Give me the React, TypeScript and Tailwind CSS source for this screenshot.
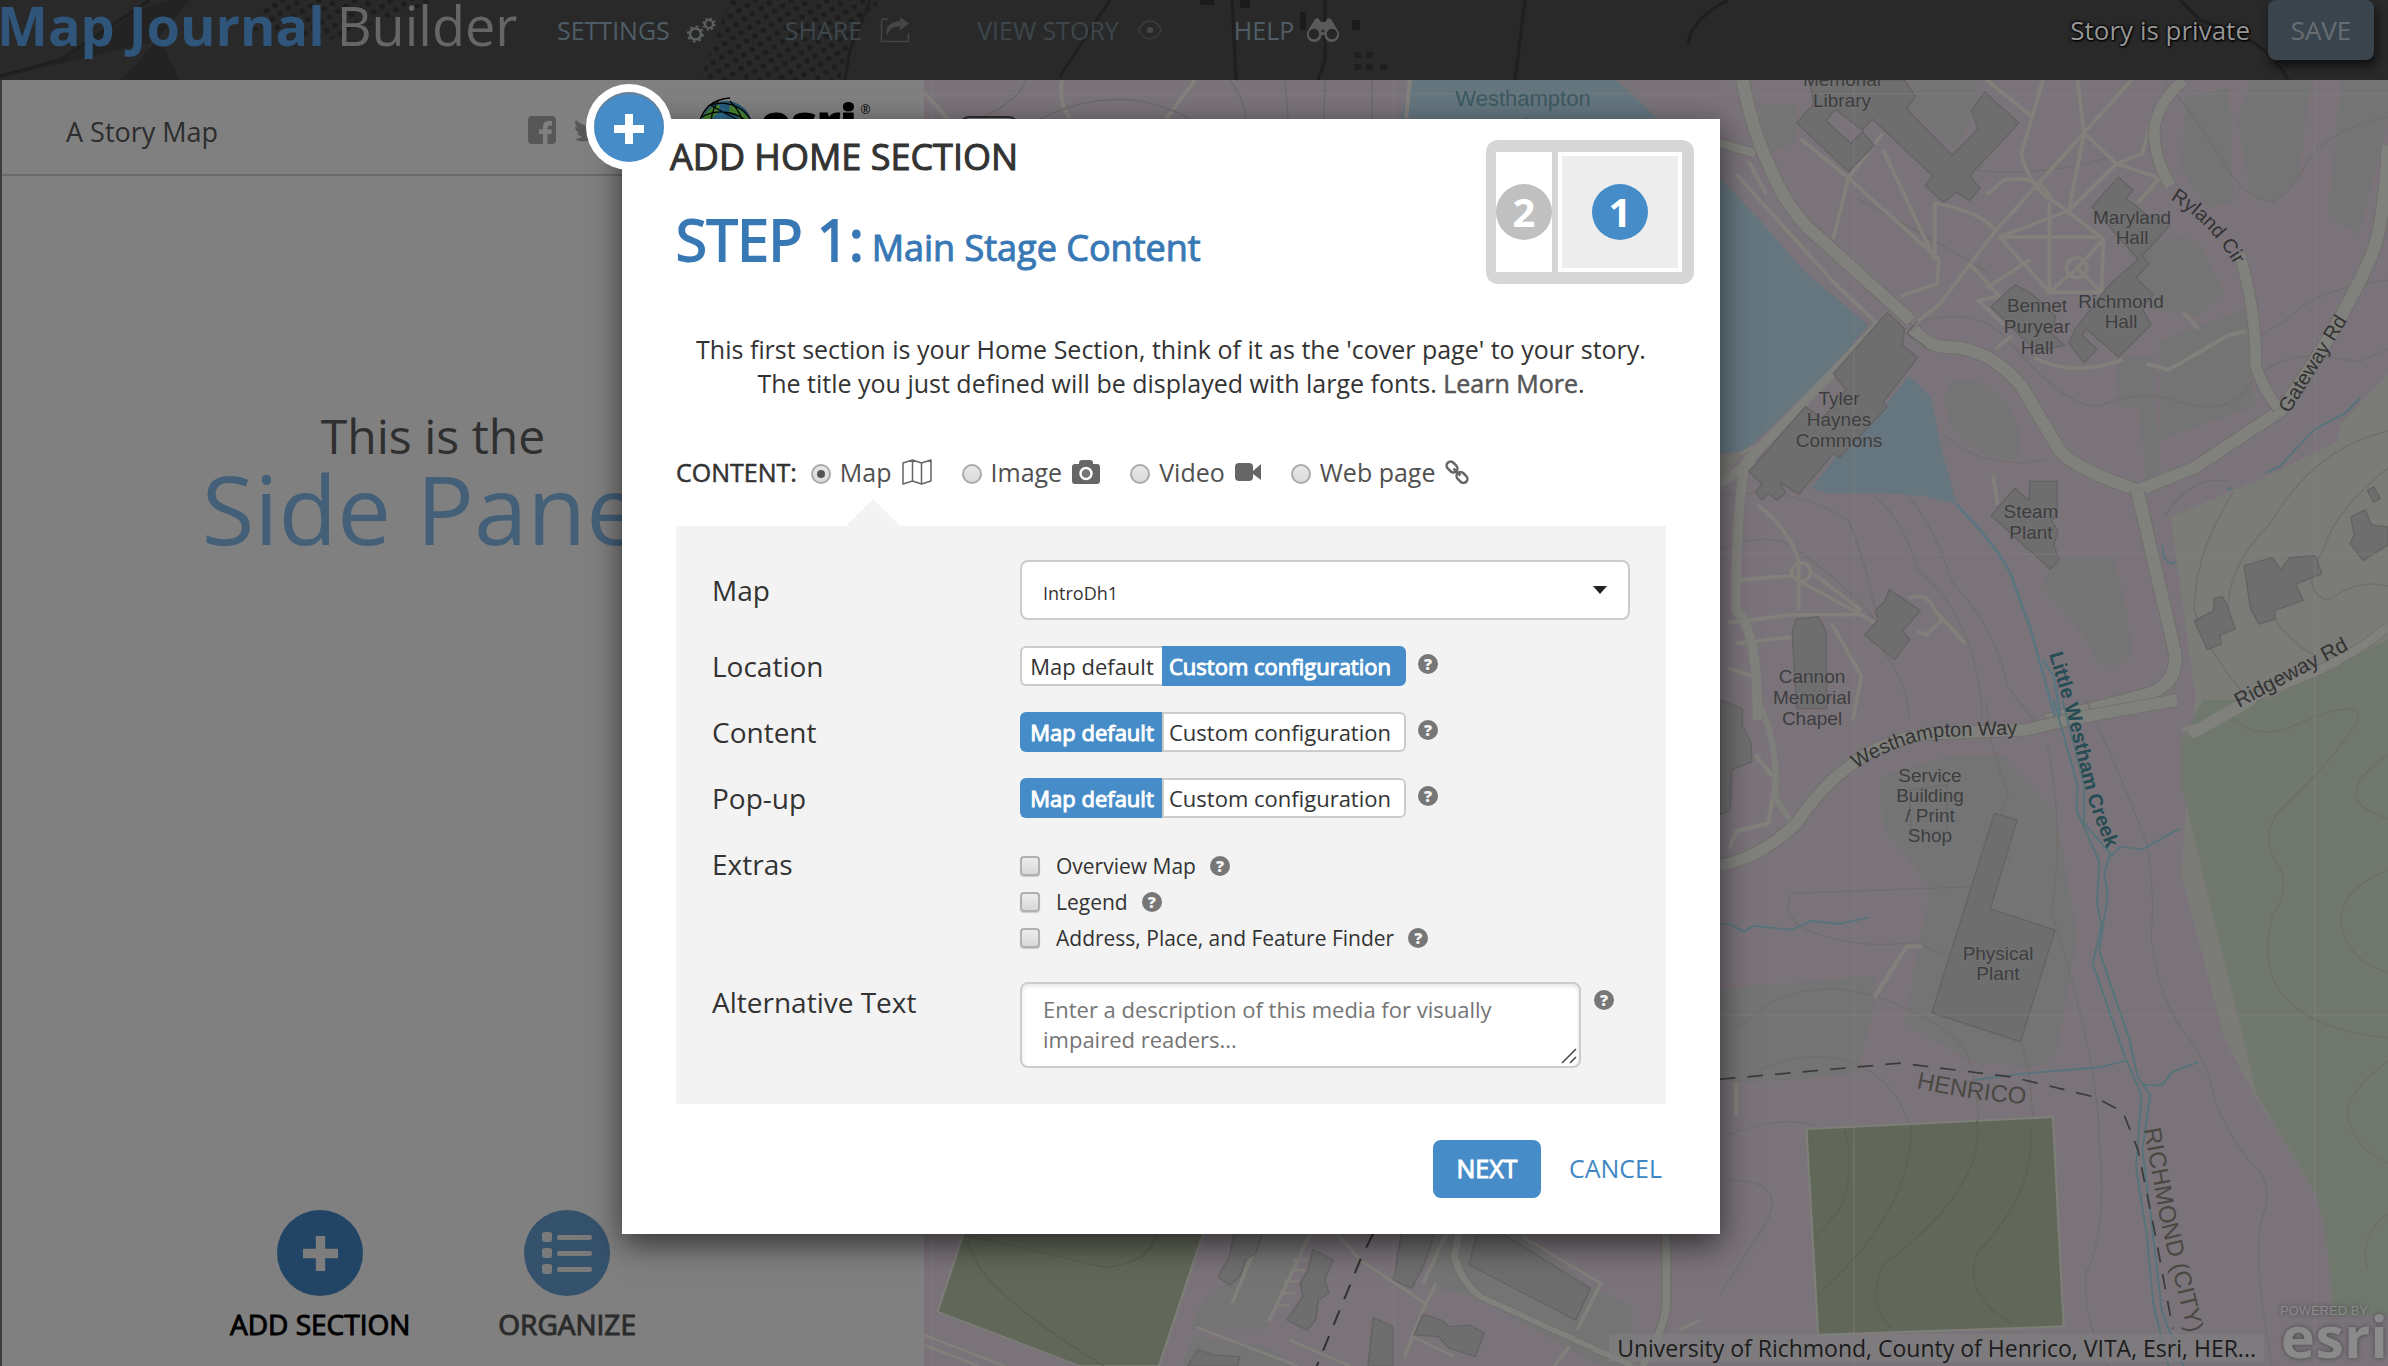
import React from "react";

const FAKE_BOLD = "[-webkit-text-stroke:1px_currentColor]";

function GearsIcon() {
  return (
    <svg viewBox="0 0 30 26" className="h-[26px] w-[30px]" fill="none" stroke="#5c6062">
      <circle cx="9.500" cy="17" r="5.500" strokeWidth="2.500" />
      <circle cx="9.500" cy="17" r="7.600" strokeWidth="1.800" strokeDasharray="2.800 3.170" />
      <circle cx="23" cy="7" r="4" strokeWidth="2.200" />
      <circle cx="23" cy="7" r="5.800" strokeWidth="1.600" strokeDasharray="2.200 2.350" />
    </svg>
  );
}

function ShareIcon() {
  return (
    <svg viewBox="0 0 30 28" className="h-7 w-[30px]">
      <path d="M8 3H3.500Q1.500 3 1.500 5V25.500H28.500V17" fill="none" stroke="#454545" strokeWidth="1.500" />
      <path d="M20 1L29 7.500L20 14.500V10.500C12 10 9 14 7 20C5 12 9 5.500 20 5Z" fill="#454545" />
    </svg>
  );
}

function EyeIcon() {
  return (
    <svg viewBox="0 0 26 22" className="h-[22px] w-[26px]">
      <path d="M1.500 11C5 4 9 2 13 2S21 4 24.500 11C21 18 17 20 13 20S5 18 1.500 11Z" fill="none" stroke="#3c3c3c" strokeWidth="1.500" />
      <circle cx="13" cy="11" r="3" fill="#484848" />
    </svg>
  );
}

function BinocularsIcon() {
  return (
    <svg viewBox="0 0 34 24" className="h-6 w-[34px]">
      <path d="M9 1L12 0L15 4H19L22 0L25 1L31 11C36 18 31 24 26 24C21 24 19 21 18.500 17H15.500C15 21 13 24 8 24C3 24-2 18 3 11Z" fill="#5a5a5a" />
      <circle cx="8" cy="16" r="5.200" fill="#262626" />
      <circle cx="26" cy="16" r="5.200" fill="#262626" />
      <circle cx="17" cy="13" r="1.500" fill="#262626" />
    </svg>
  );
}

function FacebookIcon() {
  return (
    <svg viewBox="0 0 28 28" className="size-7">
      <rect width="28" height="28" rx="4" fill="#575757" />
      <path d="M15 28V18H11V13.500H15V11Q15 5 21 5H24V9.500H21.500Q19.500 9.500 19.500 11.500V13.500H24L23.300 18H19.500V28Z" fill="#808080" />
    </svg>
  );
}

function TwitterIcon() {
  return (
    <svg viewBox="0 0 24 24" className="size-7" fill="#575757">
      <path d="M23.950 4.570a10 10 0 01-2.820.77 4.960 4.960 0 002.160-2.720c-.95.55-2 .95-3.130 1.180a4.920 4.920 0 00-8.380 4.480C7.690 8.090 4.070 6.130 1.640 3.160a4.820 4.820 0 00-.67 2.480c0 1.710.87 3.210 2.190 4.100a4.900 4.900 0 01-2.230-.62v.06a4.920 4.920 0 003.950 4.830 5 5 0 01-2.210.08 4.940 4.940 0 004.600 3.420A9.870 9.870 0 010 19.540a13.990 13.990 0 007.560 2.210c9.050 0 14-7.500 14-13.980 0-.21 0-.42-.02-.63a9.940 9.940 0 002.410-2.570z" />
    </svg>
  );
}

function EsriGlobe() {
  return (
    <svg viewBox="0 0 60 60" className="size-[60px]">
      <defs>
        <radialGradient id="sea" cx="0.400" cy="0.300" r="0.700">
          <stop offset="0" stopColor="#2f6f8f" />
          <stop offset="1" stopColor="#0f3350" />
        </radialGradient>
      </defs>
      <circle cx="30" cy="30" r="26" fill="url(#sea)" />
      <path d="M8 18Q16 8 24 8L23 14L18 20L12 24L4 28ZM34 8Q48 12 54 24L44 22L40 17L33 15Z" fill="#47822f" />
      <path d="M3 26C8 8 20 2 34 1M12 9C26 3 46 6 57 26M6 20C24 10 46 16 56 30M22 4C15 14 13 30 16 40M34 4C44 14 48 24 48 34M14 8L40 22" fill="none" stroke="#000" strokeWidth="1.300" />
    </svg>
  );
}

function MapIcon() {
  return (
    <svg viewBox="0 0 30 26" className="h-[26px] w-[30px]" fill="none" stroke="#666" strokeWidth="1.500" strokeLinejoin="round">
      <path d="M1 4L10.500 1L19.500 4L29 1V22L19.500 25L10.500 22L1 25ZM10.500 1V22M19.500 4V25" />
    </svg>
  );
}

function CameraIcon() {
  return (
    <svg viewBox="0 0 28 24" className="h-6 w-7">
      <path d="M3 4H7V3Q7 0 10 0H18Q21 0 21 3V4H25Q28 4 28 7V21Q28 24 25 24H3Q0 24 0 21V7Q0 4 3 4Z" fill="#666" />
      <circle cx="14" cy="13.500" r="5.500" fill="none" stroke="#fff" strokeWidth="2.500" />
      <circle cx="14" cy="13.500" r="3.500" fill="#777" />
    </svg>
  );
}

function VideoIcon() {
  return (
    <svg viewBox="0 0 26 18" className="h-[18px] w-[26px]" fill="#666">
      <rect width="18" height="18" rx="4" />
      <path d="M18 8L26 1V17L18 11Z" />
    </svg>
  );
}

function LinkIcon() {
  return (
    <svg viewBox="0 0 24 24" className="size-6" fill="none" stroke="#666" strokeWidth="2.500">
      <rect x="1" y="3" width="12" height="8" rx="4" transform="rotate(45 7 7)" />
      <rect x="11" y="13.500" width="12" height="8" rx="4" transform="rotate(45 17 17.500)" />
      <path d="M8.500 8.500L15.500 15.500" />
    </svg>
  );
}

function PlusIcon({ className }: { className: string }) {
  return (
    <svg viewBox="0 0 30 30" className={className} fill="currentColor">
      <path d="M11 0H19V11H30V19H19V30H11V19H0V11H11Z" />
    </svg>
  );
}

function ListIcon() {
  return (
    <svg viewBox="0 0 50 42" className="h-[42px] w-[50px]" fill="#7a7a7a">
      <rect x="0" y="0" width="10" height="10" rx="3" />
      <rect x="0" y="16" width="10" height="10" rx="3" />
      <rect x="0" y="32" width="10" height="10" rx="3" />
      <rect x="15" y="3" width="35" height="5" rx="2" />
      <rect x="15" y="19" width="35" height="5" rx="2" />
      <rect x="15" y="35" width="35" height="5" rx="2" />
    </svg>
  );
}

function Help() {
  return (
    <button
      type="button"
      aria-label="Help"
      className="flex size-5 shrink-0 items-center justify-center rounded-full bg-[#777] text-[16px] leading-5 font-extrabold text-[#f3f3f3]"
    >
      ?
    </button>
  );
}

function HeaderTexture() {
  return (
    <svg className="absolute inset-0 h-full w-full" viewBox="0 0 2388 80" preserveAspectRatio="xMinYMin slice">
      <defs>
        <pattern id="dots" width="14" height="14" patternUnits="userSpaceOnUse" patternTransform="rotate(12)">
          <circle cx="4" cy="4" r="2.800" fill="#1d1d1d" />
          <circle cx="11" cy="11" r="2.800" fill="#1d1d1d" />
        </pattern>
      </defs>
      <rect width="2388" height="80" fill="#292929" />
      <path d="M730 0H880L850 40L840 80H700Z" fill="url(#dots)" />
      <path d="M270 0H440L330 40L250 30Z" fill="url(#dots)" />
      <path d="M0 78L60 62L140 10L170 0H190L140 60L120 80H180L160 40" fill="#232323" />
      <g fill="none" stroke="#1f1f1f" strokeWidth="3">
        <path d="M0 76L60 60L150 0M870 0L850 50L845 80M1110 0L1060 76M1232 0L1236 80M1325 0V60L1318 80M1525 0L1515 80M1728 0Q1690 20 1688 45M2180 0L2200 20Q2270 40 2288 80" />
      </g>
      <g fill="#1b1b1b">
        <path d="M1200 0H1214V5H1200ZM1240 0H1250V8H1240ZM1300 12H1306V30H1300ZM1352 20H1360V30H1352Z" />
        <path fill="#1f1f1f" d="M1354 52H1361V58H1354ZM1366 52H1373V58H1366ZM1354 64H1361V70H1354ZM1366 64H1373V70H1366ZM1380 64H1387V70H1380Z" />
      </g>
    </svg>
  );
}

const labels: { x: number; y: number; lines: string[]; step: number }[] = [
  { x: 1842, y: 86, lines: ["Memorial", "Library"], step: 21 },
  { x: 2132, y: 224, lines: ["Maryland", "Hall"], step: 20 },
  { x: 2037, y: 312, lines: ["Bennet", "Puryear", "Hall"], step: 21 },
  { x: 2121, y: 308, lines: ["Richmond", "Hall"], step: 20 },
  { x: 1839, y: 405, lines: ["Tyler", "Haynes", "Commons"], step: 21 },
  { x: 2031, y: 518, lines: ["Steam", "Plant"], step: 21 },
  { x: 1812, y: 683, lines: ["Cannon", "Memorial", "Chapel"], step: 21 },
  { x: 1930, y: 782, lines: ["Service", "Building", "/ Print", "Shop"], step: 20 },
  { x: 1998, y: 960, lines: ["Physical", "Plant"], step: 20 },
];

function Road({ d, width }: { d: string; width: number }) {
  return (
    <>
      <path d={d} fill="none" stroke="#6f6e6b" strokeWidth={width + 3} strokeLinejoin="round" />
      <path d={d} fill="none" stroke="#80807d" strokeWidth={width - 1} strokeLinejoin="round" />
    </>
  );
}

function CampusMap() {
  return (
    <svg
      className="absolute inset-0 h-full w-full"
      viewBox="924 80 1464 1286"
      preserveAspectRatio="xMinYMin slice"
      role="img"
      aria-label="Campus map"
      fontFamily='"Liberation Sans", Arial, sans-serif'
    >
      <defs>
        <path id="ryland" d="M2170 199Q2215 226 2238 272" />
        <path id="westway" d="M1856 769Q1900 742 1940 737L2030 734" />
        <path id="creek" d="M2049 654L2068 718L2088 800L2120 885" />
        <path id="henrico" d="M1916 1088Q1980 1102 2040 1105" />
        <path id="richmond" d="M2144 1129L2160 1220L2196 1366" />
      </defs>
      <rect x="924" y="80" width="1464" height="1286" fill="#7a737a" />
      <path d="M1412 80H1616L1658 119L1720 178L1766 227L1805 272L1868 325L1835 366L1745 451L1720 453L1600 400L1400 119Z" fill="#65767f" />
      <g fill="none" stroke="#82817c" strokeWidth="4">
        <path d="M1062 80Q1058 100 1070 119M1195 80L1166 119M1410 80L1406 119M924 92L948 119" />
      </g>
      <g fill="none" stroke="#6f6a6a" strokeWidth="1.500">
        <path d="M980 119Q1020 100 1026 80M1040 119Q1120 80 1190 119M1230 80Q1245 100 1246 119M1285 80L1288 119M1325 80L1324 119M1372 80V119" />
      </g>

      {/* north-east quadrant */}
      <g transform="matrix(.4324 0 0 .4082 1710 80)" strokeLinejoin="round">
        <path d="M460 725L510 775L535 900L570 1040L500 1020L400 1012H270L235 1000L300 910L410 790Z" fill="#65767f" />
        <path d="M1065 1070L1290 970L1450 885L1460 840L1568 720V1568H1130Z" fill="#7b7b78" />
        <path d="M1568 1370L1240 1545L1200 1568H1568Z" fill="#70786d" />
        <g fill="#747474">
          <path d="M1100 40L1200 20L1210 300L1150 310L1090 220ZM1250 0H1390L1360 240L1300 300L1250 280L1220 100ZM1460 0H1568V100L1500 380L1430 330Z" />
          <path d="M1020 400Q1130 360 1150 440L1190 520L1130 580L1020 560L985 480ZM940 680H1030V780L1040 960L1010 980L990 800H945ZM560 740Q640 720 690 800Q740 900 700 930Q640 940 560 850Q530 780 560 740ZM800 1170H930Q960 1250 975 1400Q950 1450 900 1430Q860 1340 765 1240Z" />
          <path d="M1040 640L1240 560L1280 640L1250 700L1260 800L1040 880Z" />
          <path d="M470 0H620L600 100L570 170L450 60ZM110 60H200V150L140 180Z" />
        </g>
        <g fill="none" stroke="#726d6d" strokeWidth="3">
          <path d="M1050 0Q1110 70 1180 190Q1230 290 1300 300Q1350 270 1370 220Q1420 120 1568 90M600 220Q760 240 920 190M460 600Q620 540 700 650Q820 800 900 800Q980 760 1060 780Q1180 830 1240 760Q1300 660 1440 680L1500 690L1568 660M1568 490Q1400 510 1330 590Q1280 620 1260 640M340 290Q500 380 640 470M23 1020Q200 990 320 1080Q370 1200 400 1400Q460 1480 460 1568M380 1020Q450 1080 480 1200Q620 1320 630 1568M460 1020Q520 1100 560 1230Q660 1340 690 1490L750 1568M23 1150Q140 1100 200 1150Q330 1250 380 1320M540 870Q640 960 780 930M1210 1010Q1120 1160 1120 1300Q1150 1400 1240 1510M1568 860Q1400 900 1300 1080Q1190 1200 1200 1300M1568 950Q1440 1060 1420 1150Q1360 1250 1430 1275Q1500 1220 1568 1240M1300 1310Q1340 1380 1400 1410M1050 1070Q1120 960 1200 985" />
        </g>
        <g fill="none" stroke="#81807b" strokeWidth="9">
          <path d="M640 0L745 90M770 0L720 180Q740 270 800 300L910 390L905 520H785V300M850 0L865 130L830 320L670 385H910M865 130L940 205L1040 240L990 300M975 0L865 130M1020 100L1000 180L940 205L830 320M865 130L660 370L530 550L470 600M400 130L320 240L210 145M320 240L530 440L525 500L440 530M320 240L285 390M400 170L520 440M520 300V440M520 300Q640 330 660 370M640 280L680 245Q760 230 790 290M670 385L785 520M600 450L670 530L620 540L680 600M740 440L640 510M850 460L910 390M850 460L785 520M850 460L905 520M700 625L660 660M750 680Q840 730 955 685M1010 695L1060 710L1200 625L1240 615M1095 570L1130 610M655 970L665 1040" />
          <circle cx="848" cy="460" r="24" />
        </g>
        <g fill="none" stroke="#81807b" strokeWidth="9">
          <path d="M60 230L290 500L390 600M90 200L130 280M110 1040Q190 1110 205 1180V1300M60 1225L185 1215L350 1310L380 1330M240 1210L350 1300M40 1330L190 1310H350M60 1380L190 1365M40 1440L100 1460M280 1330L350 1460L330 1568M460 1270Q500 1250 520 1300L590 1380M480 1350L500 1360L540 1320M100 900L23 940" />
          <circle cx="211" cy="1205" r="22" />
        </g>
        <path d="M390 600L80 940Q60 1060 60 1300Q110 1340 110 1568M23 990L100 930" fill="none" stroke="#80807d" strokeWidth="22" />
        <path d="M23 920L75 910L23 985Z" fill="#7a7a77" />
        <Road d="M23 155L105 180" width={22} />
        <Road d="M75 0Q100 130 135 205Q170 300 225 360L465 590" width={30} />
        <Road d="M470 610Q500 655 560 655Q650 660 720 750L810 910Q850 955 990 1005L1120 950L1320 810Q1450 620 1530 430Q1560 350 1568 160" width={30} />
        <Road d="M988 1005L1075 1400Q1085 1480 1010 1505L780 1568" width={30} />
        <Road d="M1095 0Q1030 60 1027 130Q1030 200 1065 260M1225 425Q1265 580 1262 700Q1280 760 1315 805" width={26} />
        <Road d="M1568 1340Q1500 1400 1400 1450L1130 1568" width={22} />
        <g fill="#6e6e6e" stroke="#636363" strokeWidth="3">
          <path d="M230 0H450L475 40L455 70L560 185L620 120L605 75L635 30L715 105L600 235L625 265L600 295L570 275L540 300L498 260L515 235L375 95L350 125L380 160L320 225L200 105L240 60Z" />
          <path d="M945 238L978 270L962 290L1010 330L1065 355L1000 430L1015 450L985 485L1025 525L1000 560L1020 600L945 678L870 610L860 625L895 660L865 692L830 645L845 610L925 500L990 440L883 310Z" />
          <path d="M705 502L740 520L800 580L790 620L820 650L780 660L740 650L650 555Z" />
          <path d="M410 570L450 610L445 650L480 680L400 790L410 800L300 925L285 915L205 1015L160 985L175 1010L155 1030L135 1012L120 1028L105 1010L120 990L90 960L220 800L260 830L315 760L285 720Z" />
          <path d="M740 983H803V1060L790 1080L805 1105L795 1140L808 1175L787 1198L650 1067L705 1000L738 1030Z" />
          <path d="M200 1320L250 1315L268 1350L270 1540H200L190 1350Z" />
          <path d="M415 1248L487 1300L445 1350L462 1370L427 1420L358 1360L390 1320L382 1300L402 1280Z" />
          <path d="M1235 1190L1300 1170L1320 1200L1340 1170L1400 1165L1415 1210L1355 1235L1372 1275L1305 1300L1308 1320L1270 1333L1250 1295Z" />
          <path d="M1120 1325L1165 1300L1165 1270L1185 1265L1197 1290L1215 1345L1180 1360L1182 1382L1150 1395Z" />
          <path d="M1482 1070L1515 1053L1530 1090L1568 1095V1140L1510 1177L1480 1135L1490 1115ZM1520 1005L1535 997L1550 1025L1535 1035Z" />
        </g>
        <path d="M290 72L355 125L325 155L268 100Z" fill="#7a737a" stroke="#636363" strokeWidth="3" />
        <path d="M480 590L455 620L500 655" fill="none" stroke="#636363" strokeWidth="3" />
        <path d="M570 1040Q690 1170 705 1240L740 1340L800 1568M770 1420L795 1460L812 1568" fill="none" stroke="#5a7680" strokeWidth="6" />
        <path d="M1285 963L1320 945L1345 915L1400 855L1470 815L1503 780M1195 1005L1208 998M1045 1140L1050 1170L1065 1185L1078 1180" fill="none" stroke="#52747a" strokeWidth="4" />
      </g>

      {/* south-east quadrant */}
      <g transform="matrix(.4324 0 0 .4247 1710 700)" strokeLinejoin="round">
        <path d="M1120 0H1568V1400H1440Q1430 1240 1400 1160L1265 940L1190 800L1090 410Z" fill="#7b7b78" />
        <path d="M1140 0H1568V1450H1440Q1430 1240 1400 1160L1265 930L1090 200V100Z" fill="#70786d" />
        <g fill="#747474">
          <path d="M395 180L560 130H680L800 270L850 560L800 830Q760 880 700 860L600 850L450 760L510 440L400 300Z" />
          <path d="M23 680L380 650V720L340 880L100 900H23Z" />
        </g>
        <g fill="none" stroke="#726d6d" strokeWidth="3">
          <path d="M640 0Q640 100 690 220Q640 340 700 380M780 100Q820 300 790 500Q900 850 900 1040Q920 1250 870 1350Q860 1450 920 1568M870 0Q960 200 1010 340Q1030 450 1020 560Q1040 720 1110 800Q1150 850 1170 950Q1210 1050 1270 1110Q1300 1150 1280 1210Q1250 1300 1300 1568M600 440L190 455Q160 500 220 540Q340 590 480 570L560 610M50 770Q80 770 130 720Q260 640 440 720Q580 780 600 850Q640 980 600 1150L400 1320Q350 1400 420 1470M100 880Q250 800 380 880Q480 960 460 1080Q420 1200 240 1400M23 1030Q280 930 320 1100Q320 1200 250 1300M40 1130Q180 1130 130 1230L23 1400M720 800Q760 950 740 1130Q600 1280 600 1350Q620 1450 740 1460" />
          <path stroke="#696f65" d="M1200 30Q1240 90 1330 70Q1500 -10 1500 40Q1480 100 1310 270Q1270 330 1320 400Q1340 450 1300 510Q1270 640 1330 700Q1400 780 1568 795M1568 130Q1450 210 1520 260L1568 280M1568 400Q1450 450 1460 530Q1480 620 1568 640M1568 850Q1450 940 1480 1000Q1500 1060 1568 1090M1568 1210Q1500 1260 1520 1340" />
        </g>
        <path d="M380 700L455 580H490M60 900V980M105 130L145 180M150 200L135 290L60 310L45 350M1090 70L1130 60" fill="none" stroke="#81807b" strokeWidth="10" />
        <path d="M110 0Q160 100 150 230L190 290" fill="none" stroke="#7e7e7b" strokeWidth="14" />
        <Road d="M1080 0L860 40L730 70L500 80Q400 95 330 150Q260 200 200 290Q120 370 23 390" width={28} />
        <path d="M1250 0L1120 75" fill="none" stroke="#80807d" strokeWidth="28" strokeLinecap="round" />
        <g fill="#6e6e6e" stroke="#636363" strokeWidth="3">
          <path d="M658 267L710 283L648 492L798 542L718 805L513 736Z" />
          <path d="M462 212L548 200V308H465Z" fill="#747474" stroke="#6b6b6b" />
          <path d="M23 0L75 20V60L95 100L97 145L50 165L47 260L23 270Z" />
        </g>
        <path d="M223 1010L793 982L818 1475L250 1495Z" fill="#626859" stroke="#7e7f78" strokeWidth="5" />
        <g fill="none" stroke="#5b6052" strokeWidth="3">
          <path d="M310 1010Q340 1100 300 1200L240 1270M465 1000Q470 1200 250 1400M617 990Q640 1150 400 1330Q360 1420 420 1480M740 1000Q760 1150 620 1300Q580 1400 700 1470" />
        </g>
        <g fill="none" stroke="#52747a" strokeWidth="4">
          <path d="M795 0L850 200L848 260L900 380L895 480L905 530L885 620L960 840L998 930L985 1100L1010 1260L1025 1420L1060 1568M815 0L865 200V290L925 360L912 410L920 460L900 590L970 800L990 890L1018 930L1000 1060L1020 1220L1045 1440L1095 1568M925 370L950 345L1000 352L1085 303M610 895L720 880L900 865L960 850M1000 905L1045 908L1070 875L1128 853M23 525L50 530L78 545L100 532L190 541L235 520L300 527L368 512" />
        </g>
        <path d="M23 893L440 855L700 888L890 935L955 970L990 1060L1030 1260L1070 1480" fill="none" stroke="#3b3b3b" strokeWidth="4" strokeDasharray="36 28" />
      </g>

      {/* strip below the dialog */}
      <g transform="matrix(.523 0 0 .3333 900 1220)" strokeLinejoin="round">
        <path d="M640 0H800L700 330L560 330Q560 230 640 180ZM1020 0H1150L1320 200L1400 260L1400 438H1340L1100 230L1010 200ZM560 350L700 380L760 438H540Z" fill="#747474" />
        <path d="M130 0H588L495 438H345L72 275Z" fill="#626859" stroke="#7e7f78" strokeWidth="4" />
        <path d="M130 50Q150 50 390 142Q480 130 490 40M130 60Q140 200 390 438" fill="none" stroke="#5a5e50" strokeWidth="3" />
        <g fill="none" stroke="#81807b" strokeWidth="7">
          <path d="M46 345L200 438M46 375L150 438M690 40L635 250M785 40L705 305M835 40L880 120L1005 250L965 410M1045 40L1000 190M1025 190L1005 250M565 320L760 438M745 360L860 438M1190 50L1340 190L1295 330M980 350L1060 410M1490 330L1530 300M1280 380L1250 438M750 120H780M745 150H775M735 185H765M728 220H755M720 255H745" />
        </g>
        <Road d="M1075 0L1060 110Q1075 190 1110 230L1400 438" width={16} />
        <Road d="M1465 0V260Q1460 330 1420 438" width={16} />
        <g fill="#6e6e6e" stroke="#636363" strokeWidth="3">
          <path d="M640 30H695L680 100L660 120L650 170L630 195L608 170L630 110Z" />
          <path d="M790 88L828 120L812 180L820 220L800 240L795 300L778 330L740 300L770 230L765 190L780 150Z" />
          <path d="M960 30H1023L1010 100L1000 140L978 205L943 180L950 120Z" />
          <path d="M1110 0L1320 205L1292 300L1088 135Z" />
          <path d="M1000 283L1035 300L1050 320L1090 315L1117 340L1100 410L1050 385L1030 350L983 345Z" />
          <path d="M905 293L943 320V438H895ZM570 388L600 405L650 410L645 438H550Z" />
        </g>
        <path d="M905 40L880 120L797 438" fill="none" stroke="#303030" strokeWidth="4" strokeDasharray="45 35" />
      </g>

      <g stroke="#87848a" strokeOpacity=".5" strokeWidth="1">
        <path d="M924 94H2388M924 554H2388M924 1015H2388M932 80V1366M1394 80V1366M1854 80V1366M2315 80V1366" />
      </g>

      <path d="M962 140V124Q962 117 970 117H1008Q1016 117 1016 124V140" fill="#808080" stroke="#2c2c2c" strokeWidth="2" />

      <g fill="#3d3d3f" fontSize="19" textAnchor="middle" stroke="#7a7a7a" strokeWidth="2" strokeOpacity=".35" paintOrder="stroke">
        {labels.map((l) => (
          <text key={l.lines.join(" ")}>
            {l.lines.map((t, i) => (
              <tspan key={t} x={l.x} y={l.y + i * l.step}>
                {t}
              </tspan>
            ))}
          </text>
        ))}
      </g>
      <g fill="#3c5a60" fontSize="22" textAnchor="middle">
        <text x="1523" y="106">Westhampton</text>
        <text x="1523" y="134">Lake</text>
      </g>
      <g fill="#333" fontSize="20">
        <text><textPath href="#ryland">Ryland Cir</textPath></text>
        <text transform="translate(2289 414) rotate(-58)">Gateway Rd</text>
        <text transform="translate(2239 708) rotate(-28)" fontSize="21">Ridgeway Rd</text>
        <text fontSize="20"><textPath href="#westway">Westhampton Way</textPath></text>
        <text fill="#264c54" fontWeight="bold" fontSize="20"><textPath href="#creek">Little Westham Creek</textPath></text>
      </g>
      <g fill="#4a4843" fontSize="24">
        <text><textPath href="#henrico">HENRICO</textPath></text>
        <text><textPath href="#richmond">RICHMOND (CITY)</textPath></text>
      </g>
    </svg>
  );
}

function Header() {
  const item = "flex items-center";
  return (
    <header className="relative h-20 shrink-0 overflow-hidden bg-[#292929]">
      <HeaderTexture />
      <div className="relative flex h-[60px] items-center text-[25px] leading-[60px]">
        <h1 className="-ml-[3px] flex w-[560px] shrink-0 gap-3 self-start text-[54px] leading-[50px] whitespace-nowrap">
          <span className="font-bold text-[#2f567a]">Map Journal</span>
          <span className="text-[#666]">Builder</span>
        </h1>
        <nav className="flex grow items-center text-[#4e5d66]">
          <button type="button" className={item + " gap-4"}>SETTINGS <GearsIcon /></button>
          <button type="button" className={item + " ml-[69px] gap-[18px] text-[#3d464b]"}>SHARE <ShareIcon /></button>
          <button type="button" className={item + " ml-[67px] gap-[18px] text-[#3d464b]"}>VIEW STORY <EyeIcon /></button>
          <button type="button" className={item + " ml-[71px] gap-3"}>HELP <BinocularsIcon /></button>
        </nav>
        <p className="mr-[18px] text-[26px] text-[#969696] [text-shadow:0_0_3px_#000,0_0_3px_#000,1px_1px_2px_#000]">Story is private</p>
        <button
          type="button"
          className="mr-[14px] h-[60px] w-[106px] rounded-lg bg-[#3a444c] text-[26px] text-[#666e74] shadow-[2px_6px_10px_#111]"
        >
          SAVE
        </button>
      </div>
    </header>
  );
}

function SidePanel() {
  return (
    <aside className="flex w-[924px] shrink-0 flex-col border-l-2 border-[#3c3c3c] bg-[#808080]">
      <div className="flex h-24 shrink-0 items-center border-b-2 border-[#6a6a6a] pl-16">
        <p className="w-[462px] pt-[10px] text-[27px] text-[#2d2d2d]">A Story Map</p>
        <a href="#facebook" aria-label="Facebook" className="mt-[6px]"><FacebookIcon /></a>
        <a href="#twitter" aria-label="Twitter" className="mt-[6px] ml-[18px]"><TwitterIcon /></a>
        <a href="#esri" className="relative ml-[94px] flex items-start gap-1 text-black">
          <EsriGlobe />
          <span className={"text-[50px] leading-[50px] font-extrabold " + FAKE_BOLD}>esri</span>
          <sup className="text-[12px] leading-[38px]">®</sup>
        </a>
      </div>
      <div className="flex grow flex-col justify-between pr-[60px] text-center">
        <div className="pt-[228px]">
          <p className="text-[48px] leading-[64px] text-[#2f2f2f]">This is the</p>
          <p className="text-[96px] leading-[80px] text-[#446078]">Side Panel</p>
        </div>
        <div className="flex justify-center gap-[88px] pb-[22px] text-[28px] leading-10">
          <button type="button" className="flex flex-col items-center gap-2 text-black">
            <span className="flex size-[86px] items-center justify-center rounded-full bg-[#234565] text-[#7d7d7d]">
              <PlusIcon className="size-[35px]" />
            </span>
            <span className={FAKE_BOLD}>ADD SECTION</span>
          </button>
          <button type="button" className="flex flex-col items-center gap-2 text-[#2b2b2b]">
            <span className="flex size-[86px] items-center justify-center rounded-full bg-[#35526c]">
              <ListIcon />
            </span>
            <span className={FAKE_BOLD}>ORGANIZE</span>
          </button>
        </div>
      </div>
    </aside>
  );
}

function MapStage() {
  return (
    <main className="relative grow overflow-hidden bg-[#7a737a]">
      <CampusMap />
      <p className="absolute right-[124px] bottom-1 bg-[#808080]/60 px-2 text-[23px] leading-7 whitespace-nowrap text-[#1c1c1c]">
        University of Richmond, County of Henrico, VITA, Esri, HER...
      </p>
      <div className="absolute right-0 bottom-[14px] flex flex-col items-end text-[#8a8a8a] [text-shadow:0_0_4px_#444]">
        <span className="mr-5 font-[Liberation_Sans] text-[13px] leading-[18px]">POWERED BY</span>
        <span className="text-[58px] leading-[32px] font-bold">esri</span>
      </div>
    </main>
  );
}

const media = [
  { id: "map", label: "Map", icon: <MapIcon /> },
  { id: "image", label: "Image", icon: <CameraIcon /> },
  { id: "video", label: "Video", icon: <VideoIcon /> },
  { id: "webpage", label: "Web page", icon: <LinkIcon /> },
];

function ConfigRow({ label, custom }: { label: string; custom: boolean }) {
  const [isCustom, setCustom] = React.useState(custom);
  const on = "border-[#458cc8] bg-[#458cc8] text-white [-webkit-text-stroke:1px_white]";
  const off = "border-[#ccc] bg-white text-[#333]";
  return (
    <div className="flex" role="group" aria-label={label}>
      <span className="w-[308px] text-[28px] leading-10">{label}</span>
      <button
        type="button"
        aria-pressed={!isCustom}
        onClick={() => setCustom(false)}
        className={"h-10 w-[142px] rounded-l-md border-2 border-r-0 text-[22px] leading-9 whitespace-nowrap " + (isCustom ? off : on)}
      >
        Map default
      </button>
      <button
        type="button"
        aria-pressed={isCustom}
        onClick={() => setCustom(true)}
        className={"mr-3 h-10 w-[244px] rounded-r-md border-2 pr-2 text-[22px] leading-9 whitespace-nowrap " + (isCustom ? on : off)}
      >
        Custom configuration
      </button>
      <span className="pt-2"><Help /></span>
    </div>
  );
}

function Dialog() {
  const [kind, setKind] = React.useState("map");
  return (
    <section
      role="dialog"
      aria-labelledby="dialog-title"
      className="relative mt-[119px] mb-8 w-full max-w-[1098px] bg-white pb-9 text-[#333] shadow-[0_10px_30px_rgba(0,0,0,0.6)]"
    >
      <div className="absolute -top-[35px] -left-9 flex size-[86px] items-center justify-center rounded-full bg-white">
        <span className="flex size-[70px] items-center justify-center rounded-full bg-[#458cc8] text-white shadow-[inset_0_2px_1px_#6f8292]">
          <PlusIcon className="mt-1 size-[30px]" />
        </span>
      </div>

      <div className="flex justify-between pt-[14px] pr-[26px] pl-12">
        <div>
          <h2 id="dialog-title" className={"text-[36px] leading-[48px] " + FAKE_BOLD}>ADD HOME SECTION</h2>
          <h3 className="mt-5 flex items-baseline gap-2 pl-[6px] text-[56px] leading-[76px] text-[#3878b4] [-webkit-text-stroke:2px_currentColor]">
            STEP 1: <span className="text-[36px] [-webkit-text-stroke:1px_currentColor]">Main Stage Content</span>
          </h3>
        </div>
        <ol className="mt-[7px] flex h-36 w-52 flex-row-reverse rounded-xl bg-[#d6d6d6] py-3 pr-3 pl-[10px] text-[40px] leading-[56px] font-bold text-white">
          <li className="flex w-[124px] items-center justify-center border-4 border-white bg-[#ededed]">
            <span className="size-14 rounded-full bg-[#458cc8] text-center">1</span>
          </li>
          <li className="mr-[6px] flex w-14 items-center justify-center bg-white">
            <span className="size-14 rounded-full bg-[#c0c0c0] text-center">2</span>
          </li>
        </ol>
      </div>

      <div className="px-[54px]">
        <p className="mt-[46px] text-center text-[25px] leading-[34px]">
          This first section is your Home Section, think of it as the 'cover page' to your story.
          <br />
          The title you just defined will be displayed with large fonts.{" "}
          <a href="#learn-more" className="text-[#555] [-webkit-text-stroke:0.5px_#555]">Learn More</a>.
        </p>

        <fieldset className="mt-[54px] flex items-center text-[25px] leading-9 whitespace-nowrap">
          <legend className="contents">
            <span className="mr-[14px] [-webkit-text-stroke:0.5px_#333]">CONTENT:</span>
          </legend>
          {media.map((m) => (
            <label key={m.id} className="mr-[30px] flex items-center text-[#505050]">
              <input
                type="radio"
                name="media"
                checked={kind === m.id}
                onChange={() => setKind(m.id)}
                className="mt-1 mr-[9px] flex size-5 appearance-none items-center justify-center rounded-full border-2 border-[#aaa] bg-linear-to-b from-[#e8e8e8] to-[#dadada] checked:before:size-2 checked:before:rounded-full checked:before:bg-[#555] checked:before:content-['']"
              />
              <span className="mr-[10px]">{m.label}</span>
              {m.icon}
            </label>
          ))}
        </fieldset>

        <div className="relative mt-9 flex flex-col gap-[26px] bg-[#f3f3f3] pt-[34px] pr-9 pb-9 pl-9">
          <svg viewBox="0 0 54 27" className="absolute -top-[27px] left-[170px] h-[27px] w-[54px]" fill="#f3f3f3">
            <path d="M0 27L27 0L54 27Z" />
          </svg>
          <div className="flex items-center">
            <label htmlFor="map-select" className="w-[308px] text-[28px] leading-10">Map</label>
            <div className="relative grow">
              <select id="map-select" className="h-[60px] w-full appearance-none rounded-lg border-2 border-[#ccc] bg-white px-[21px] pt-[6px] text-[18px]">
                <option>IntroDh1</option>
              </select>
              <svg viewBox="0 0 14 8" className="pointer-events-none absolute top-[26px] right-[23px] h-2 w-[14px]" fill="#222">
                <path d="M0 0H14L7 8Z" />
              </svg>
            </div>
          </div>
          <ConfigRow label="Location" custom />
          <ConfigRow label="Content" custom={false} />
          <ConfigRow label="Pop-up" custom={false} />
          <div className="flex" role="group" aria-label="Extras">
            <span className="w-[308px] text-[28px] leading-10">Extras</span>
            <ul className="mt-1">
              {["Overview Map", "Legend", "Address, Place, and Feature Finder"].map((t) => (
                <li key={t} className="flex h-9 items-center gap-[14px] text-[21px] leading-9">
                  <label className="flex items-center gap-4">
                    <input
                      type="checkbox"
                      className="size-5 appearance-none rounded-[4px] border-2 border-[#b0b0b0] bg-linear-to-b from-[#ececec] to-[#d8d8d8] shadow-[0_1px_1px_#ccc] checked:bg-[#458cc8]"
                    />
                    {t}
                  </label>
                  <Help />
                </li>
              ))}
            </ul>
          </div>
          <div className="flex">
            <label htmlFor="alt-text" className="w-[308px] text-[28px] leading-10">Alternative Text</label>
            <div className="relative w-[561px]">
              <textarea
                id="alt-text"
                placeholder="Enter a description of this media for visually impaired readers..."
                className="block h-[86px] w-full resize-none overflow-hidden rounded-lg border-2 border-[#ccc] bg-white px-[21px] py-[10px] text-[22px] leading-[30px] shadow-[inset_0_2px_4px_#e4e4e4] placeholder:text-[#757575]"
              />
              <svg viewBox="0 0 16 16" className="pointer-events-none absolute right-1 bottom-1 size-4" stroke="#444" strokeWidth="1.500">
                <path d="M1 15L15 1M9 15L15 9" />
              </svg>
            </div>
            <span className="pt-2 pl-[13px]"><Help /></span>
          </div>
        </div>

        <div className="mt-9 flex justify-end text-[25px]">
          <button type="button" className="h-[58px] w-[108px] rounded-lg bg-[#458cc8] text-white [-webkit-text-stroke:1px_white]">NEXT</button>
          <button type="button" className="h-[58px] pr-1 pl-7 text-[#3f87c4]">CANCEL</button>
        </div>
      </div>
    </section>
  );
}

export default function App() {
  return (
    <div className='relative flex min-h-screen flex-col overflow-hidden font-["Open_Sans","Noto_Sans",sans-serif]'>
      <Header />
      <div className="flex grow">
        <SidePanel />
        <MapStage />
      </div>
      <div className="absolute inset-0 flex items-start justify-center pr-[46px]">
        <Dialog />
      </div>
    </div>
  );
}
